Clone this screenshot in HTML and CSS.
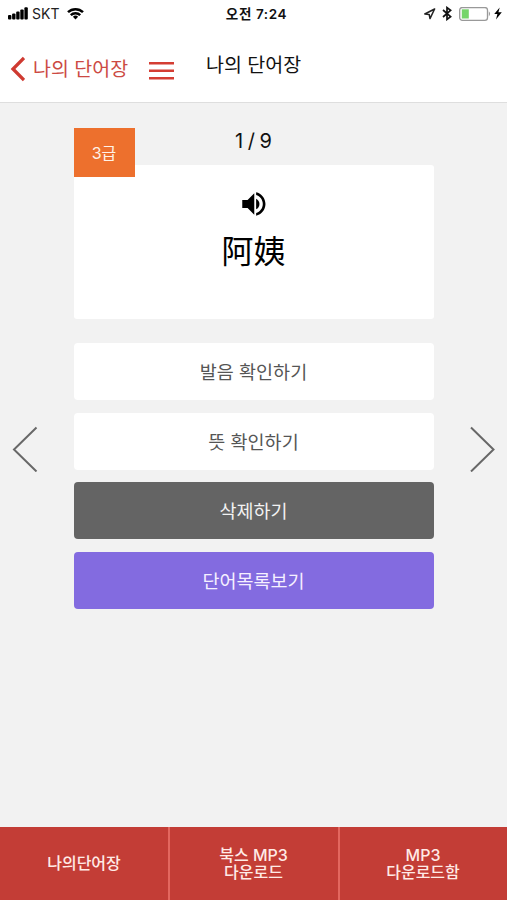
FILE: index.html
```html
<!DOCTYPE html>
<html lang="ko">
<head>
<meta charset="utf-8">
<title>나의 단어장</title>
<link rel="stylesheet" href="styles.css">
</head>
<body>
<div class="app">
  <header class="top">
    <div class="status">
      <div class="status-left">
        <svg class="signal" width="21" height="13" viewBox="0 0 21 13"><rect x="0" y="8" width="3.4" height="4.5" rx="1"/><rect x="4.1" y="6.5" width="3.4" height="6" rx="1"/><rect x="8.2" y="4.5" width="3.4" height="8" rx="1"/><rect x="12.3" y="2.5" width="3.4" height="10" rx="1"/><rect x="16.4" y="0.3" width="3.4" height="12.2" rx="1"/></svg>
        <span class="carrier">SKT</span>
        <svg class="wifi" width="17" height="13" viewBox="0 0 17 13" fill="none" stroke="#000" stroke-width="2.5"><path d="M1 5.2A10.8 10.8 0 0 1 16 5.2"/><path d="M3.8 8.2A6.8 6.8 0 0 1 13.2 8.2"/><path d="M8.5 12.5L5.9 9.8A3.8 3.8 0 0 1 11.1 9.8Z" fill="#000" stroke="none"/></svg>
      </div>
      <span class="clock">오전 7:24</span>
      <div class="status-right">
        <svg width="12" height="12" viewBox="0 0 12 12" fill="none" stroke="#222" stroke-width="1.5" stroke-linejoin="round"><path d="M10.6 1L0.8 6L5.2 6.5L6 10.6Z"/></svg>
        <svg class="bluetooth" width="10" height="15" viewBox="0 0 10 15" fill="none" stroke="#111" stroke-width="1.7"><path d="M1 4L8.6 10.7L5 13.4V1.6L8.6 4.3L1 11"/></svg>
        <svg class="battery" width="32" height="14" viewBox="0 0 32 14"><rect x="0.7" y="0.5" width="27.8" height="12.8" rx="2.6" fill="#fff" stroke="#999" stroke-width="1.3"/><rect x="2.8" y="2.3" width="7" height="9.2" fill="#75d56a"/><path d="M29.8 4.2Q32.4 6.8 29.8 9.4Z" fill="#999"/></svg>
        <svg class="bolt" width="8" height="13" viewBox="0 0 8 13"><path d="M5.7 0.5L0.2 7.1H3.4L2 12.5L7.8 5.3H4.4Z"/></svg>
      </div>
    </div>
    <nav class="nav">
      <a class="back">
        <svg width="16" height="26" viewBox="0 0 16 26" fill="none" stroke="#cf3a31" stroke-width="3.3"><path d="M15 2L4 13L15 24"/></svg>
        <span>나의 단어장</span>
      </a>
      <svg class="menu" width="26" height="20" viewBox="0 0 26 20" stroke="#d43d33" stroke-width="2.5"><path d="M0 2.2H25M0 9.7H25M0 17.2H25"/></svg>
      <h1 class="title">나의 단어장</h1>
    </nav>
  </header>

  <main class="study">
    <button class="arrow" aria-label="이전"><svg width="26" height="46" viewBox="0 0 26 46"><path d="M24.5 1.5L2 23.5L24.5 45.5"/></svg></button>
    <section class="deck">
      <span class="level">3급</span>
      <div class="count">1 / 9</div>
      <div class="card">
        <svg class="speaker" width="32" height="32" viewBox="0 0 24 24"><path d="M3.2 9v6h4l5 5V4l-5 5h-4z"/><path d="M13.6 8v8c1.5-.7 2.5-2.3 2.5-4s-1-3.3-2.5-4z"/><path d="M13.6 3.2v2.1c2.9.9 5 3.5 5 6.7s-2.1 5.8-5 6.7v2.1c4-.9 7-4.5 7-8.8s-3-7.9-7-8.8z"/></svg>
        <div class="word" lang="zh">阿姨</div>
      </div>
      <div class="actions">
        <button class="action">발음 확인하기</button>
        <button class="action">뜻 확인하기</button>
        <button class="action dark">삭제하기</button>
        <button class="action purple">단어목록보기</button>
      </div>
    </section>
    <button class="arrow" aria-label="다음"><svg width="26" height="46" viewBox="0 0 26 46"><path d="M2 1.5L24.5 23.5L2 45.5"/></svg></button>
  </main>

  <footer class="tabs">
    <a class="tab">나의단어장</a>
    <a class="tab">북스 MP3<br>다운로드</a>
    <a class="tab">MP3<br>다운로드함</a>
  </footer>
</div>
</body>
</html>
```
FILE: styles.css
```css
* { box-sizing: border-box; }
body {
  margin: 0;
  background: #f2f2f2;
  color: #111;
  font-family: Inter, "Noto Sans CJK KR", sans-serif;
}
svg { display: block; flex: none; }
button { border: 0; padding: 0; font: inherit; }
.app { display: flex; flex-direction: column; height: 900px; }

.top { height: 103px; background: #fff; border-bottom: 1px solid #dedede; }
.status {
  display: grid;
  grid-template-columns: 1fr auto 1fr;
  align-items: center;
  height: 27px;
  padding: 0 5px 0 8px;
}
.status-left, .status-right { display: flex; align-items: center; }
.status-right { justify-content: flex-end; }
.carrier { margin-left: 3px; font-size: 14px; line-height: 20px; color: #222; }
.wifi { margin-left: 8px; }
.clock { padding-left: 3px; font-size: 13.5px; line-height: 20px; font-weight: 600; letter-spacing: 0.6px; }
.bluetooth { margin-left: 6px; }
.battery { margin-left: 7px; }
.bolt { margin-left: 3px; }

.nav { display: flex; height: 75px; padding-left: 9px; }
.back {
  display: flex;
  align-items: center;
  gap: 8px;
  width: 140px;
  height: 84px;
  font-size: 19.5px;
  line-height: 28px;
  color: #cc4a43;
  white-space: nowrap;
}
.menu { margin-top: 34px; }
.title { margin: 24px 0 0 31px; font-size: 19.5px; line-height: 28px; font-weight: 400; }

.study {
  display: flex;
  flex: 1;
  justify-content: space-between;
  padding: 0 12px;
}
.arrow { align-self: flex-start; margin-top: 323px; background: none; }
.arrow path { fill: none; stroke: #686868; stroke-width: 2; }
.deck { position: relative; width: 360px; }
.level {
  position: absolute;
  top: 25px;
  left: 0;
  width: 61px;
  height: 49px;
  background: #ed702d;
  color: #fff2e6;
  font-size: 16px;
  line-height: 50px;
  text-align: center;
}
.count { height: 61.5px; padding-top: 24px; font-size: 20px; line-height: 28px; text-align: center; word-spacing: -1px; }
.card {
  display: flex;
  flex-direction: column;
  align-items: center;
  height: 154px;
  padding-top: 23px;
  background: #fff;
  border-radius: 3px;
}
.word {
  margin-top: 6px;
  font-family: "Noto Sans CJK SC", sans-serif;
  font-size: 32px;
  line-height: 46px;
  color: #000;
}
.actions { display: flex; flex-direction: column; gap: 12.6px; margin-top: 24.5px; }
.action {
  height: 57px;
  padding-top: 1px;
  border-radius: 4px;
  background: #fff;
  color: #555;
  font-size: 18.5px;
  line-height: 28px;
}
.dark { background: #646464; color: #f2f2f2; }
.purple { background: #836be0; color: #f5f0ff; }

.tabs { display: grid; grid-template-columns: 168px 170px 1fr; height: 73px; }
.tab {
  display: flex;
  align-items: center;
  justify-content: center;
  background: #c33d36;
  color: #ffeae6;
  font-size: 16px;
  line-height: 17px;
  font-weight: 500;
  text-align: center;
}
.tab + .tab { padding-right: 1px; border-left: 2px solid #e3675f; }
```
